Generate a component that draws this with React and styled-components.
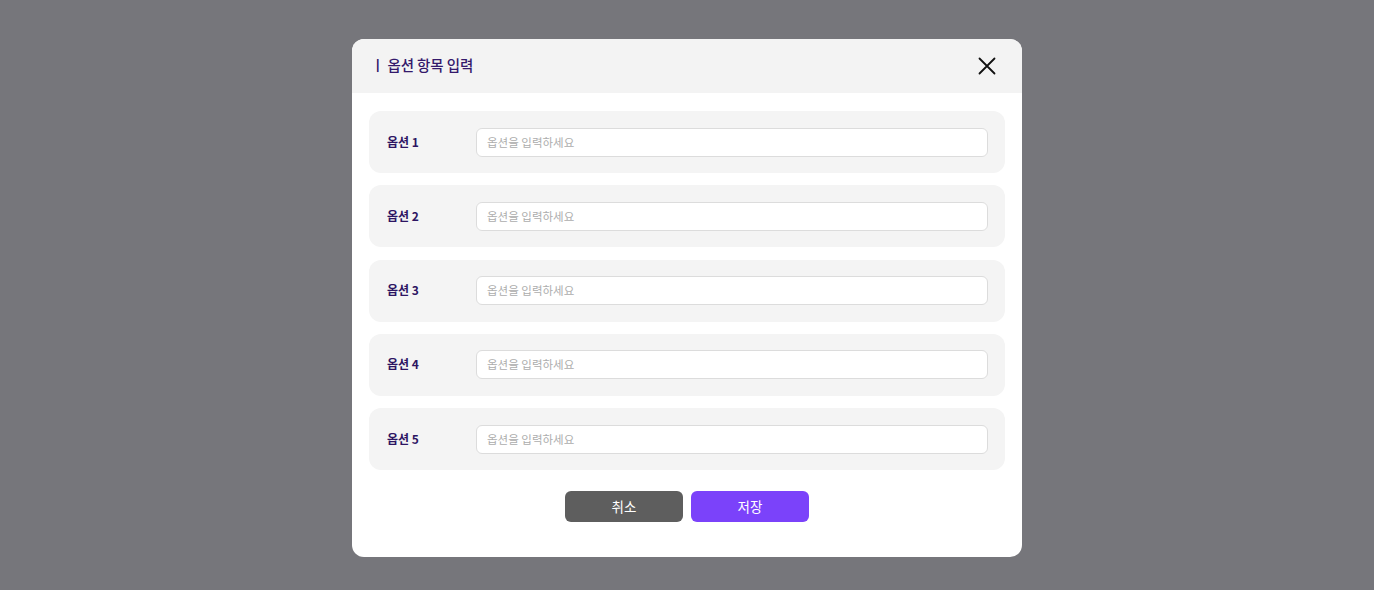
import React from "react";
import styled, { createGlobalStyle } from "styled-components";

const GlobalStyle = createGlobalStyle`
  html, body {
    margin: 0;
    padding: 0;
  }
  body {
    font-family: Inter, "Noto Sans CJK KR", "Noto Sans", sans-serif;
  }
  * {
    box-sizing: border-box;
  }
`;

const Overlay = styled.div`
  width: 100%;
  height: 590px;
  background: #76767b;
  display: flex;
  justify-content: center;
  padding-top: 39px;
`;

const Modal = styled.div`
  width: 670px;
  height: 518px;
  background: #fff;
  border-radius: 12px;
  overflow: hidden;
  display: flex;
  flex-direction: column;
`;

const Header = styled.div`
  height: 54px;
  flex-shrink: 0;
  background: #f3f3f3;
  display: flex;
  align-items: center;
  justify-content: space-between;
  padding: 0 25px 0 19px;
`;

const Title = styled.h2`
  margin: 0 0 3px;
  font-size: 14.5px;
  font-weight: 500;
  color: #34196b;
  font-family: "Noto Sans CJK KR", sans-serif;
  letter-spacing: -0.1px;
`;

const CloseButton = styled.button`
  border: 0;
  background: none;
  padding: 0;
  width: 20px;
  height: 20px;
  display: flex;
  align-items: center;
  justify-content: center;
  cursor: pointer;
`;

const Body = styled.div`
  padding: 18px 17px 0;
  display: flex;
  flex-direction: column;
  gap: 12.25px;
`;

const Row = styled.div`
  height: 62px;
  background: #f4f4f4;
  border-radius: 12px;
  display: flex;
  align-items: center;
  padding: 0 17px 0 18px;
`;

const Label = styled.label`
  width: 89px;
  padding-bottom: 2px;
  font-size: 12px;
  font-weight: 600;
  color: #2d1562;
  font-family: "Noto Sans CJK KR", sans-serif;
`;

const Input = styled.input`
  flex: 1;
  height: 29px;
  border: 1px solid #dcdcdc;
  border-radius: 6px;
  background: #fff;
  padding: 0 10px 1px;
  font-size: 11.5px;
  font-family: "Noto Sans CJK KR", sans-serif;
  outline: none;
  &::placeholder {
    color: #adadad;
  }
`;

const Footer = styled.div`
  display: flex;
  justify-content: center;
  gap: 8px;
  padding-top: 21px;
`;

const Button = styled.button`
  width: 118px;
  height: 31px;
  border: 0;
  border-radius: 6px;
  padding: 0 0 2px;
  background: ${({ $primary }) => ($primary ? "#7b42fa" : "#5e5e5e")};
  color: #fff;
  font-size: 13.5px;
  font-family: "Noto Sans CJK KR", sans-serif;
  cursor: pointer;
`;

const options = [1, 2, 3, 4, 5];

const App = () => {
  return (
    <>
      <GlobalStyle />
      <Overlay>
        <Modal>
          <Header>
            <Title>ㅣ 옵션 항목 입력</Title>
            <CloseButton aria-label="닫기">
              <svg width="18" height="18" viewBox="0 0 18 18">
                <path
                  d="M1.5 1.5 L16.5 16.5 M16.5 1.5 L1.5 16.5"
                  stroke="#111"
                  strokeWidth="1.8"
                  strokeLinecap="round"
                />
              </svg>
            </CloseButton>
          </Header>
          <Body>
            {options.map((n) => (
              <Row key={n}>
                <Label>옵션 {n}</Label>
                <Input placeholder="옵션을 입력하세요" />
              </Row>
            ))}
          </Body>
          <Footer>
            <Button>취소</Button>
            <Button $primary>저장</Button>
          </Footer>
        </Modal>
      </Overlay>
    </>
  );
};

export default App;
